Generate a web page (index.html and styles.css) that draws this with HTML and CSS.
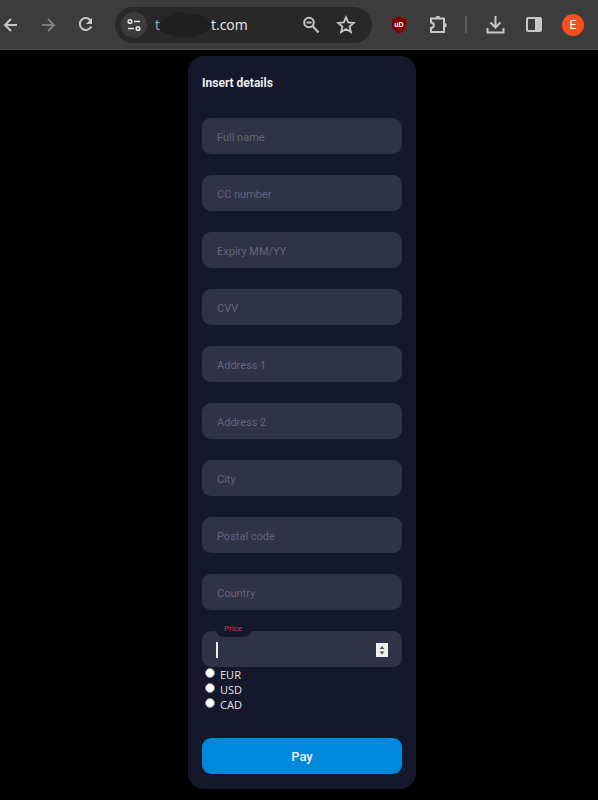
FILE: index.html
```
<!DOCTYPE html>
<html lang="en">
<head>
    <meta charset="UTF-8">
    <meta name="viewport" content="width=device-width, initial-scale=1.0">
    <title>Insert details</title>
    <link rel="stylesheet" href="styles.css">
</head>
<body>
    <header class="toolbar">
        <div class="nav-buttons">
            <button type="button" class="icon-btn" aria-label="Back">
                <svg viewBox="0 0 22 22"><path d="M17 11H5.500M11 5l-6 6 6 6"/></svg>
            </button>
            <button type="button" class="icon-btn dim" aria-label="Forward">
                <svg viewBox="0 0 22 22"><path d="M4 11h11.500M10 5l6 6-6 6"/></svg>
            </button>
            <button type="button" class="icon-btn" aria-label="Reload">
                <svg viewBox="0 0 22 22"><path d="M14.800 6.600A6 6 0 1 0 15.300 12.500"/><path class="solid" d="M16 4v6h-6z"/></svg>
            </button>
        </div>

        <div class="omnibox">
            <button type="button" class="site-info" aria-label="Site information">
                <svg viewBox="0 0 14 14"><circle cx="3" cy="3.500" r="1.800"/><path d="M7 3.500h6M1 10.500h6"/><circle cx="11" cy="10.500" r="1.800"/></svg>
            </button>
            <div class="url">
                <span class="url-start">t</span>
                <svg class="scribble" viewBox="0 0 54 32"><path d="M1 15C3 11 8 10 12 6C16 1 23 2 30 5C37 4 45 6 47 10C52 11 54 15 52 19C49 24 44 24 39 26C30 30 17 29 12 25C6 25 0 22 1 15Z"/></svg>
                <span>t.com</span>
            </div>
            <button type="button" class="icon-btn" aria-label="Zoom">
                <svg viewBox="0 0 22 22"><circle cx="9" cy="8.500" r="4.800"/><path d="M12.500 12l6 6.500M6.500 8.500h5"/></svg>
            </button>
            <button type="button" class="icon-btn" aria-label="Bookmark">
                <svg viewBox="0 0 22 22"><path class="thin" d="M11 3.300l2.200 5.100 5.600.5-4.200 3.700 1.300 5.500-4.900-3-4.900 3 1.300-5.500-4.200-3.700 5.600-.5z"/></svg>
            </button>
        </div>

        <div class="actions">
            <button type="button" class="icon-btn" aria-label="uBlock Origin">
                <svg viewBox="0 0 22 22"><path class="shield" d="M12 2c2.300 1.800 4.800 2.500 7.500 2.700v5c0 5-3.200 8-7.500 10.300-4.300-2.300-7.500-5.300-7.500-10.300v-5c2.700-.2 5.200-.9 7.500-2.700z"/><text class="shield-text" x="12" y="12.500" text-anchor="middle">uD</text></svg>
            </button>
            <button type="button" class="icon-btn" aria-label="Extensions">
                <svg viewBox="0 0 22 22"><path d="M5 4.500h13V18H5v-4a2.700 2.700 0 0 0 0-5.500z"/><path class="solid" d="M9.500 4a2.300 2.300 0 0 1 4.600 0zM18.500 9a2.300 2.300 0 0 1 0 4.600z"/></svg>
            </button>
            <span class="divider"></span>
            <button type="button" class="icon-btn" aria-label="Downloads">
                <svg viewBox="0 0 22 22"><path d="M11.500 2v11M6.500 8.500l5 5 5-5M3.500 14v4.500h16V14"/></svg>
            </button>
            <button type="button" class="icon-btn" aria-label="Side panel">
                <svg viewBox="0 0 22 22"><rect x="4" y="4" width="14" height="13" rx="1"/><path class="solid" d="M12 4h6v13h-6z"/></svg>
            </button>
            <button type="button" class="avatar">E</button>
        </div>
    </header>

    <main>
        <form class="form">
            <h1 class="title">Insert details</h1>

            <div class="input-container">
                <input id="fullname" class="input" type="text">
                <label for="fullname" class="placeholder">Full name</label>
            </div>
            <div class="input-container">
                <input id="ccnumber" class="input" type="text">
                <label for="ccnumber" class="placeholder">CC number</label>
            </div>
            <div class="input-container">
                <input id="expiry" class="input" type="text">
                <label for="expiry" class="placeholder">Expiry MM/YY</label>
            </div>
            <div class="input-container">
                <input id="cvv" class="input" type="text">
                <label for="cvv" class="placeholder">CVV</label>
            </div>
            <div class="input-container">
                <input id="address1" class="input" type="text">
                <label for="address1" class="placeholder">Address 1</label>
            </div>
            <div class="input-container">
                <input id="address2" class="input" type="text">
                <label for="address2" class="placeholder">Address 2</label>
            </div>
            <div class="input-container">
                <input id="city" class="input" type="text">
                <label for="city" class="placeholder">City</label>
            </div>
            <div class="input-container">
                <input id="postal" class="input" type="text">
                <label for="postal" class="placeholder">Postal code</label>
            </div>
            <div class="input-container">
                <input id="country" class="input" type="text">
                <label for="country" class="placeholder">Country</label>
            </div>
            <div class="input-container last">
                <input id="price" class="input" type="number">
                <label for="price" class="cut">Price</label>
                <span class="caret"></span>
                <svg class="spinner" viewBox="0 0 12 14"><path d="M6 3l2.500 3h-5zM6 11.500l2.500-3h-5z"/></svg>
            </div>

            <div class="currency">
                <label><input type="radio" name="currency" value="EUR">EUR</label>
                <label><input type="radio" name="currency" value="USD">USD</label>
                <label><input type="radio" name="currency" value="CAD">CAD</label>
            </div>

            <button type="button" class="submit">Pay</button>
        </form>
    </main>
</body>
</html>
```
FILE: styles.css
```
* {
    box-sizing: border-box;
}
body {
    margin: 0;
    background: #000;
    font-family: Roboto, "Liberation Sans", sans-serif;
}
button {
    border: 0;
    padding: 0;
    background: none;
    font-family: inherit;
}

/* browser bar */
.toolbar {
    display: flex;
    align-items: center;
    height: 50px;
    padding-right: 14px;
    background: #3c3c3c;
    border-bottom: 1px solid #4a4a4a;
}
.nav-buttons {
    display: flex;
    gap: 16px;
}
.actions {
    display: flex;
    align-items: center;
    gap: 17px;
}
.icon-btn {
    width: 22px;
    height: 22px;
    flex: none;
}
.icon-btn svg {
    display: block;
    width: 22px;
    height: 22px;
    fill: none;
    stroke: #c7c7c7;
    stroke-width: 2;
}
.icon-btn.dim svg {
    stroke: #7d7d7d;
}
.icon-btn .thin {
    stroke-width: 1.8;
}
.icon-btn .solid {
    fill: #c7c7c7;
    stroke: none;
}
.icon-btn .shield {
    fill: #800000;
    stroke: #5c2a2a;
    stroke-width: 1;
}
.icon-btn .shield-text {
    fill: #fff;
    stroke: none;
    font: bold 7px "Liberation Sans", sans-serif;
}
.omnibox {
    display: flex;
    align-items: center;
    flex: 1;
    height: 36px;
    margin: 0 15px 0 17px;
    padding: 0 15px 0 6px;
    gap: 13px;
    border-radius: 18px;
    background: #282828;
}
.site-info {
    display: flex;
    align-items: center;
    justify-content: center;
    flex: none;
    width: 26px;
    height: 26px;
    border-radius: 50%;
    background: #3c3c3c;
}
.site-info svg {
    width: 14px;
    height: 14px;
    fill: none;
    stroke: #e3e3e3;
    stroke-width: 1.6;
}
.url {
    display: flex;
    align-items: center;
    flex: 1;
    min-width: 0;
    margin-left: -5px;
    color: #e8e8e8;
    font: 14px/20px "Open Sans", "Noto Sans", sans-serif;
}
.url-start {
    color: #8fb0c4;
}
.scribble {
    flex: none;
    width: 54px;
    height: 32px;
    margin-left: -2px;
    margin-right: -1px;
    fill: #1f1f1f;
}
.divider {
    width: 2px;
    height: 17px;
    background: #5c5c5c;
}
.avatar {
    width: 22px;
    height: 22px;
    border-radius: 50%;
    background: #f4511e;
    color: #fff;
    font-size: 12px;
}

/* payment form */
main {
    padding: 6px 0 11px 6px;
}
.form {
    width: 228px;
    margin: 0 auto;
    padding: 18px 14px 15px;
    border-radius: 16px;
    background: #15172b;
}
.title {
    margin: 0 0 26px;
    color: #eee;
    font-size: 12px;
    line-height: 18px;
}
.input-container {
    position: relative;
    height: 36px;
    margin-bottom: 21px;
}
.input-container.last {
    margin-bottom: 0;
}
.input {
    display: block;
    width: 100%;
    height: 100%;
    padding: 4px 14px 0;
    border: 0;
    border-radius: 9px;
    outline: 0;
    background: #303245;
    color: #eee;
    font-family: inherit;
    font-size: 13px;
    appearance: textfield;
}
.input::-webkit-inner-spin-button {
    appearance: none;
}
.placeholder {
    position: absolute;
    left: 15px;
    top: 12px;
    color: #65657b;
    font-size: 11px;
    line-height: 16px;
    pointer-events: none;
}
.cut {
    position: absolute;
    left: 14px;
    top: -10px;
    width: 36px;
    height: 16px;
    padding-right: 2px;
    border-radius: 8px;
    background: #15172b;
    color: #dc2f55;
    font-size: 8px;
    line-height: 16px;
    text-align: center;
}
.caret {
    position: absolute;
    left: 14px;
    top: 11px;
    width: 2px;
    height: 16px;
    background: #eee;
}
.spinner {
    position: absolute;
    right: 14px;
    top: 12px;
    width: 12px;
    height: 14px;
    background: #efefef;
    fill: #505050;
}
.currency label {
    display: flex;
    align-items: center;
    height: 15px;
    color: #ddd;
    font: 11px/14px "Noto Sans", sans-serif;
}
.currency input {
    appearance: none;
    width: 10px;
    height: 10px;
    margin: 0 5px 3px 3px;
    border: 1px solid #8a8a8a;
    border-radius: 50%;
    background: #fff;
}
.submit {
    display: block;
    width: 100%;
    height: 36px;
    margin-top: 26px;
    border-radius: 9px;
    background: #08d;
    color: #eee;
    font-size: 13px;
    font-weight: 500;
}
```
